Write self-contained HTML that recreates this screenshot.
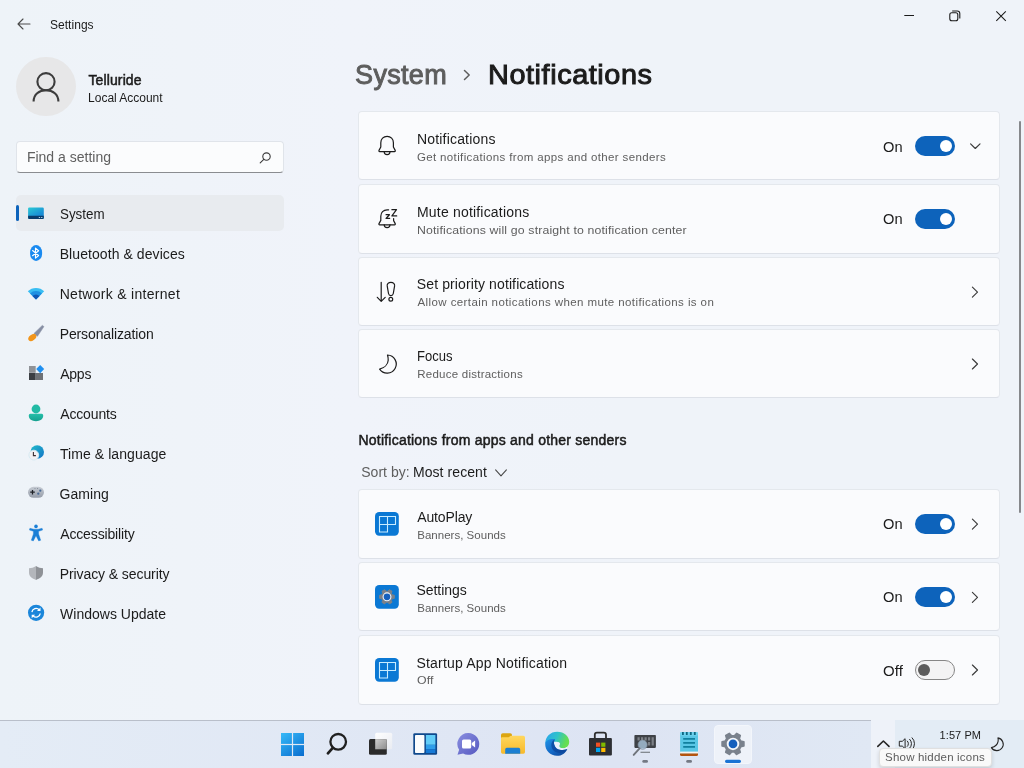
<!DOCTYPE html>
<html>
<head>
<meta charset="utf-8">
<title>Settings</title>
<style>
*{box-sizing:border-box;margin:0;padding:0}
html,body{width:1024px;height:768px;overflow:hidden}
body{background:linear-gradient(90deg,#eef3f8 0%,#eff3f9 18%,#f0f3fa 34%,#eff3f9 60%,#eff3f9 100%);font-family:"Liberation Sans",sans-serif;color:#1b1b1b;position:relative}
.abs{position:absolute}
.t{position:absolute;white-space:nowrap;line-height:1;transform-origin:0 50%}
/* sidebar */
.nv{color:#1b1b1b}
.sel{position:absolute;left:16px;top:195.3px;width:267.5px;height:35.5px;border-radius:5px;background:#e8ebef}
.pill{position:absolute;left:16px;top:205.3px;width:3px;height:15.6px;border-radius:2px;background:#0d63bb}
.ico{position:absolute;left:26px;width:20px;height:20px}
/* cards */
.card{position:absolute;left:357.9px;width:642px;height:69px;background:#fafbfd;border:1px solid #e4e8ed;border-bottom-color:#dde1e8;border-radius:4px}
.ct{color:#1b1b1b}
.cs{color:#5e5e5e}
.st{color:#1b1b1b}
.tog{position:absolute;left:915px;width:40px;height:20px;border-radius:10px;background:#0d63bb}
.tog i{position:absolute;right:2.7px;top:3.8px;width:12.4px;height:12.4px;border-radius:50%;background:#fff}
.tog.off{background:#f3f3f4;border:1px solid #868686}
.tog.off i{left:1.9px;right:auto;top:2.9px;width:12.2px;height:12.2px;background:#5c5c5c}
svg{position:absolute;overflow:visible}
</style>
</head>
<body>
<div id="root" style="position:absolute;left:0;top:0;width:1024px;height:768px;will-change:transform">

<!-- ===== title bar ===== -->
<svg style="left:17px;top:18px" width="14" height="12" viewBox="0 0 14 12" fill="none" stroke="#4a4a4a" stroke-width="1.1" stroke-linecap="round" stroke-linejoin="round"><path d="M13 6H1.2M6 1L1 6l5 5"/></svg>
<div class="t" id="tSettings" style="left:50.00px;top:19.00px;font-size:12px;color:#1b1b1b;font-weight:normal;letter-spacing:0.034px">Settings</div>

<svg style="left:904px;top:15px" width="12" height="2" viewBox="0 0 12 2"><path d="M0.3 0.5H10" stroke="#1b1b1b" stroke-width="1"/></svg>
<svg style="left:949px;top:10px" width="12" height="12" viewBox="0 0 12 12" fill="none" stroke="#1b1b1b" stroke-width="1.1"><rect x="0.8" y="2.8" width="8" height="8" rx="2"/><path d="M3.2 1h5a2.6 2.6 0 0 1 2.6 2.6v5"/></svg>
<svg style="left:996px;top:11px" width="12" height="12" viewBox="0 0 12 12" fill="none" stroke="#1b1b1b" stroke-width="1.05"><path d="M0.3 0.3l9.5 9.500M9.800 0.300l-9.500 9.500"/></svg>

<!-- ===== account ===== -->
<div class="abs" style="left:16.4px;top:57px;width:59.4px;height:59.4px;border-radius:50%;background:#e7e7e8"></div>
<svg style="left:31.1px;top:70px" width="30" height="34" viewBox="0 0 30 34" fill="none" stroke="#3c3c3c" stroke-width="2.1" stroke-linecap="butt"><circle cx="15" cy="11.700" r="8.600"/><path d="M2.600 31.500c0-7 5.400-11.200 12.400-11.200s12.400 4.200 12.400 11.200"/></svg>
<div class="t" id="tUser" style="left:88.40px;top:72.75px;font-size:14px;font-weight:normal;-webkit-text-stroke:0.5px #1b1b1b;color:#1b1b1b;letter-spacing:0.131px">Telluride</div>
<div class="t" id="tLocal" style="left:88.10px;top:91.80px;font-size:12px;color:#1b1b1b;font-weight:normal;letter-spacing:-0.021px">Local Account</div>

<!-- ===== search ===== -->
<div class="abs" style="left:16.3px;top:141.3px;width:267.4px;height:31.6px;border-radius:4px;background:#fbfcfd;border:1px solid #e0e4ea;border-bottom:1px solid #8a8c90"></div>
<div class="t" id="tFind" style="left:26.90px;top:150.10px;font-size:14px;color:#606060;font-weight:normal;letter-spacing:0.003px">Find a setting</div>
<svg style="left:259px;top:151.500px" width="13" height="13" viewBox="0 0 13 13" fill="none" stroke="#3a3a3a" stroke-width="1.1" stroke-linecap="round"><circle cx="7.5" cy="4.6" r="3.7"/><path d="M4.800 7.300L1.200 10.900"/></svg>

<!-- ===== nav ===== -->
<div class="sel"></div><div class="pill"></div>
<div class="t nv" id="n0" style="top:207.00px;left:59.53px;font-size:14px;font-weight:normal;transform:scaleX(0.9556)">System</div>
<div class="t nv" id="n1" style="top:247.00px;left:59.70px;font-size:14px;font-weight:normal;letter-spacing:0.075px">Bluetooth &amp; devices</div>
<div class="t nv" id="n2" style="top:287.00px;left:59.70px;font-size:14px;font-weight:normal;letter-spacing:0.290px">Network &amp; internet</div>
<div class="t nv" id="n3" style="top:327.00px;left:59.70px;font-size:14px;font-weight:normal;letter-spacing:-0.124px">Personalization</div>
<div class="t nv" id="n4" style="top:367.00px;left:60.20px;font-size:14px;font-weight:normal;letter-spacing:-0.237px">Apps</div>
<div class="t nv" id="n5" style="top:407.00px;left:60.20px;font-size:14px;font-weight:normal;letter-spacing:-0.141px">Accounts</div>
<div class="t nv" id="n6" style="top:447.00px;left:59.90px;font-size:14px;font-weight:normal;letter-spacing:0.083px">Time &amp; language</div>
<div class="t nv" id="n7" style="top:487.00px;left:59.50px;font-size:14px;font-weight:normal;letter-spacing:0.053px">Gaming</div>
<div class="t nv" id="n8" style="top:527.00px;left:60.20px;font-size:14px;font-weight:normal;letter-spacing:-0.137px">Accessibility</div>
<div class="t nv" id="n9" style="top:567.00px;left:59.70px;font-size:14px;font-weight:normal;letter-spacing:-0.085px">Privacy &amp; security</div>
<div class="t nv" id="n10" style="top:607.00px;left:60.10px;font-size:14px;font-weight:normal;letter-spacing:0.005px">Windows Update</div>
<!--NAVICONS-->


<!-- ===== heading ===== -->
<div class="t" id="hSys" style="left:355.10px;top:61.80px;font-size:27px;color:#5d5d5d;font-weight:normal;-webkit-text-stroke:0.95px #5d5d5d;letter-spacing:0.315px">System</div>
<svg style="left:463px;top:69px" width="8" height="12" viewBox="0 0 8 12" fill="none" stroke="#5d5d5d" stroke-width="1.5" stroke-linecap="round" stroke-linejoin="round"><path d="M1.5 1.5L6.2 6 1.5 10.5"/></svg>
<div class="t" id="hNot" style="left:487.95px;top:61.80px;font-size:27px;color:#1b1b1b;font-weight:normal;-webkit-text-stroke:0.95px #1b1b1b;transform:scaleX(1.0700);letter-spacing:0.516px">Notifications</div>

<!-- ===== cards ===== -->
<div class="card" style="top:110.8px;height:69.7px"></div>
<div class="card" style="top:183.9px;height:69.8px"></div>
<div class="card" style="top:257.0px;height:68.7px"></div>
<div class="card" style="top:328.8px;height:68.9px"></div>
<div class="card" style="top:489.3px;height:69.6px"></div>
<div class="card" style="top:561.8px;height:69.7px"></div>
<div class="card" style="top:635.0px;height:69.5px"></div>

<div class="t ct" id="c0" style="top:132.00px;left:417.00px;font-size:14px;font-weight:normal;letter-spacing:0.179px">Notifications</div>
<div class="t cs" id="s0" style="top:152.15px;left:416.90px;font-size:11.5px;font-weight:normal;letter-spacing:0.367px">Get notifications from apps and other senders</div>
<div class="t ct" id="c1" style="top:205.10px;left:417.00px;font-size:14px;font-weight:normal;letter-spacing:0.189px">Mute notifications</div>
<div class="t cs" id="s1" style="top:225.15px;left:417.14px;font-size:11.5px;font-weight:normal;transform:scaleX(1.0700);letter-spacing:0.139px">Notifications will go straight to notification center</div>
<div class="t ct" id="c2" style="top:276.60px;left:416.80px;font-size:14px;font-weight:normal;letter-spacing:0.115px">Set priority notifications</div>
<div class="t cs" id="s2" style="top:296.65px;left:417.50px;font-size:11.5px;font-weight:normal;letter-spacing:0.409px">Allow certain notications when mute notifications is on</div>
<div class="t ct" id="c3" style="top:349.00px;left:417.07px;font-size:14px;font-weight:normal;transform:scaleX(0.9318)">Focus</div>
<div class="t cs" id="s3" style="top:369.15px;left:417.20px;font-size:11.5px;font-weight:normal;letter-spacing:0.247px">Reduce distractions</div>

<div class="t" id="secH" style="left:358.45px;top:432.60px;font-size:14px;font-weight:normal;-webkit-text-stroke:0.5px #1b1b1b;color:#1b1b1b;letter-spacing:0.222px">Notifications from apps and other senders</div>
<div class="t" id="sortA" style="left:361.20px;top:465.00px;font-size:14px;color:#5e5e5e;font-weight:normal;letter-spacing:0.035px">Sort by:</div>
<div class="t" id="sortB" style="left:412.90px;top:465.00px;font-size:14px;color:#1b1b1b;font-weight:normal;letter-spacing:0.085px">Most recent</div>
<svg style="left:495.2px;top:469px" width="12" height="8" viewBox="0 0 12 8" fill="none" stroke="#4a4a4a" stroke-width="1.1" stroke-linecap="round" stroke-linejoin="round"><path d="M0.6 0.900L6 6.800l5.400-5.900"/></svg>

<div class="t ct" id="c4" style="top:509.50px;left:417.20px;font-size:14px;font-weight:normal;letter-spacing:-0.133px">AutoPlay</div>
<div class="t cs" id="s4" style="top:529.55px;left:417.20px;font-size:11.5px;font-weight:normal;letter-spacing:0.023px">Banners, Sounds</div>
<div class="t ct" id="c5" style="top:582.60px;left:416.50px;font-size:14px;font-weight:normal;letter-spacing:-0.062px">Settings</div>
<div class="t cs" id="s5" style="top:602.65px;left:417.20px;font-size:11.5px;font-weight:normal;letter-spacing:0.023px">Banners, Sounds</div>
<div class="t ct" id="c6" style="top:655.75px;left:416.50px;font-size:14px;font-weight:normal;letter-spacing:0.183px">Startup App Notification</div>
<div class="t cs" id="s6" style="top:675.15px;left:416.96px;font-size:11.5px;font-weight:normal;transform:scaleX(1.0700);letter-spacing:0.064px">Off</div>

<!-- toggles + state -->
<div class="t st" id="on0" style="left:882.57px;top:139.70px;font-size:14px;font-weight:normal;transform:scaleX(1.0471);letter-spacing:0.000px">On</div><div class="tog" style="top:136px"><i></i></div>
<div class="t st" id="on1" style="left:882.57px;top:212.40px;font-size:14px;font-weight:normal;transform:scaleX(1.0471);letter-spacing:0.000px">On</div><div class="tog" style="top:209px"><i></i></div>
<div class="t st" id="on2" style="left:882.57px;top:517.40px;font-size:14px;font-weight:normal;transform:scaleX(1.0471);letter-spacing:0.000px">On</div><div class="tog" style="top:514px"><i></i></div>
<div class="t st" id="on3" style="left:882.57px;top:590.30px;font-size:14px;font-weight:normal;transform:scaleX(1.0471);letter-spacing:0.000px">On</div><div class="tog" style="top:587px"><i></i></div>
<div class="t st" id="on4" style="left:882.55px;top:663.50px;font-size:14px;font-weight:normal;transform:scaleX(1.0700);letter-spacing:0.152px">Off</div><div class="tog off" style="top:660px"><i></i></div>
<!--CHEVRONS-->
<!--CARDICONS-->
<svg style="left:0;top:0" width="1024" height="768" viewBox="0 0 1024 768">
<defs>
<linearGradient id="gSys" x1="0" y1="0" x2="0.7" y2="1"><stop offset="0" stop-color="#2bcad4"/><stop offset="0.75" stop-color="#1a8fd6"/><stop offset="1" stop-color="#1a86d0"/></linearGradient>
<linearGradient id="gGlobe" x1="0" y1="0" x2="1" y2="1"><stop offset="0" stop-color="#22bccb"/><stop offset="1" stop-color="#1273c6"/></linearGradient>
<linearGradient id="gShield" x1="0" y1="0" x2="1" y2="0"><stop offset="0.5" stop-color="#b3b6bb"/><stop offset="0.5" stop-color="#8f9297"/></linearGradient>
<linearGradient id="gPad" x1="0" y1="0" x2="0" y2="1"><stop offset="0" stop-color="#c6cbd3"/><stop offset="1" stop-color="#979eaa"/></linearGradient>
<linearGradient id="gAcc" x1="0" y1="0" x2="0" y2="1"><stop offset="0" stop-color="#25bfa9"/><stop offset="1" stop-color="#16a08f"/></linearGradient>
<linearGradient id="gWin" gradientUnits="userSpaceOnUse" x1="281" y1="733" x2="300" y2="758"><stop offset="0" stop-color="#37baf8"/><stop offset="1" stop-color="#0b6fd0"/></linearGradient>
<linearGradient id="gChat" x1="0" y1="0" x2="1" y2="1"><stop offset="0" stop-color="#8a8fe0"/><stop offset="1" stop-color="#5558c0"/></linearGradient>
<linearGradient id="gFold" x1="0" y1="0" x2="0" y2="1"><stop offset="0" stop-color="#ffd75e"/><stop offset="1" stop-color="#f7b92a"/></linearGradient>
<linearGradient id="gEdge" x1="0" y1="0" x2="1" y2="1"><stop offset="0" stop-color="#1f92e6"/><stop offset="0.55" stop-color="#1366c4"/><stop offset="1" stop-color="#0c3f8f"/></linearGradient>
<linearGradient id="gEdge2" x1="0" y1="0.300" x2="1" y2="0.600"><stop offset="0" stop-color="#2aa6ea"/><stop offset="0.45" stop-color="#2fc3c9"/><stop offset="0.85" stop-color="#5fdc5a"/><stop offset="1" stop-color="#6ae04e"/></linearGradient>
<linearGradient id="gTv" x1="0" y1="0" x2="1" y2="1"><stop offset="0" stop-color="#ffffff"/><stop offset="1" stop-color="#e9ecf2"/></linearGradient>
<linearGradient id="gTv2" x1="0" y1="0" x2="1" y2="1"><stop offset="0" stop-color="#d0d0d0"/><stop offset="1" stop-color="#8c8c8c"/></linearGradient>
</defs>
<!-- System -->
<rect x="28.1" y="207.5" width="15.7" height="11.4" rx="1.2" fill="url(#gSys)"/>
<path d="M28.100 215.800h15.700v1.900a1.200 1.200 0 0 1-1.200 1.200h-13.300a1.200 1.200 0 0 1-1.200-1.200z" fill="#0a3c6c"/>
<rect x="38.800" y="217" width="1.300" height="0.900" fill="#bfe6f7"/><rect x="41.100" y="217" width="1.300" height="0.900" fill="#bfe6f7"/>
<!-- Bluetooth -->
<rect x="30.1" y="245.1" width="12" height="15.9" rx="6" ry="7.3" fill="#1a8af0"/>
<path d="M32.6 250.5L38.6 255.5L35.5 258.1V248.1L38.6 250.7L32.6 255.7" fill="none" stroke="#fff" stroke-width="1.15" stroke-linejoin="round" stroke-linecap="round"/>
<!-- Wifi -->
<path d="M36.0 299.4L27.80 291.34A11.5 11.5 0 0 1 44.20 291.34Z" fill="#38bdf2"/>
<path d="M36.0 299.4L30.08 293.58A8.3 8.3 0 0 1 41.92 293.58Z" fill="#1d90e2"/>
<path d="M36.0 299.4L32.43 295.90A5.0 5.0 0 0 1 39.57 295.90Z" fill="#0e56b4"/>
<!-- Personalization brush -->
<path d="M42.3 325.4L43.9 326.6L37.4 336.3L34 333.5Z" fill="#868ea3" stroke="#868ea3" stroke-width="0.6" stroke-linejoin="round"/>
<ellipse cx="32.3" cy="337.5" rx="4.5" ry="2.9" transform="rotate(-38 32.3 337.5)" fill="#f2951a"/>
<!-- Apps -->
<rect x="29" y="366" width="6.7" height="6.8" fill="#8f9297"/>
<rect x="29" y="373" width="6.7" height="7" fill="#3b3e43"/>
<rect x="36" y="373" width="7" height="7" fill="#6e7176"/>
<path d="M40.2 365l4 4.100-4 4.100-4-4.100z" fill="#1f8ff0"/>
<!-- Accounts -->
<circle cx="36" cy="409" r="4.400" fill="#22baa5"/>
<path d="M28.800 415.300a1.500 1.500 0 0 1 1.500-1.500h11.400a1.500 1.500 0 0 1 1.500 1.500v.5c0 3.500-3.100 5.400-7.200 5.400s-7.200-1.900-7.200-5.400z" fill="url(#gAcc)"/>
<!-- Time & language -->
<circle cx="37.2" cy="452" r="6.8" fill="url(#gGlobe)"/>
<circle cx="33.8" cy="455.1" r="4.9" fill="#f1f1f3" stroke="#d4e9f2" stroke-width="0.9"/>
<path d="M33.400 452v3.600h2.500" fill="none" stroke="#3b2f33" stroke-width="1.100"/>
<!-- Gaming -->
<rect x="28" y="486.8" width="16" height="11" rx="5.5" fill="url(#gPad)"/>
<path d="M30.200 492.200h4.600M32.500 489.900v4.600" stroke="#1e2126" stroke-width="1.250"/>
<circle cx="40.300" cy="490.700" r="1.150" fill="#4a6a94"/><circle cx="38.300" cy="493.700" r="1.150" fill="#4a6a94"/><circle cx="35" cy="488.500" r="0.450" fill="#596273"/><circle cx="37.600" cy="488.500" r="0.450" fill="#596273"/>
<!-- Accessibility -->
<circle cx="36" cy="526.400" r="1.800" fill="#1b7fd6"/>
<path d="M29.900 528.300L33.800 529.200H38.200L42.100 528.300L42.600 530L38.600 531.300V534L40.700 540.200L38.700 540.900L36 535.700L33.300 540.900L31.300 540.200L33.400 534V531.300L29.400 530Z" fill="#1b7fd6" stroke="#1b7fd6" stroke-width="0.400" stroke-linejoin="round"/>
<!-- Privacy shield -->
<path d="M36 566c2.400 1.600 4.500 2.100 7 2.200v4.400c0 3.900-3.100 6.200-7 7.300c-3.900-1.100-7-3.400-7-7.300v-4.400c2.500-.1 4.600-.6 7-2.200z" fill="url(#gShield)"/>
<!-- Windows Update -->
<circle cx="36.100" cy="612.800" r="8.100" fill="#1b86da"/>
<path d="M31.900 612.100a4.300 4.300 0 0 1 7.300-2.400" fill="none" stroke="#fff" stroke-width="1.300"/>
<path d="M40.500 607.400v3.500h-3.500z" fill="#fff"/>
<path d="M40.300 613.500a4.300 4.300 0 0 1-7.300 2.400" fill="none" stroke="#fff" stroke-width="1.300"/>
<path d="M31.700 618.200v-3.500h3.500z" fill="#fff"/>

<!-- ===== card icons ===== -->
<g fill="none" stroke="#1b1b1b" stroke-width="1.200" stroke-linejoin="round" stroke-linecap="round">
<!-- bell -->
<path d="M387.100 136.300c-3.700 0-6.300 2.800-6.300 6.400v4.300l-1.800 3.400c-.3.600 0 1.200.7 1.200h14.800c.7 0 1-.6.700-1.200l-1.800-3.400v-4.300c0-3.600-2.600-6.400-6.300-6.400z"/>
<path d="M384.200 151.800a2.900 2.900 0 0 0 5.800 0"/>
<!-- mute bell -->
<path d="M388.600 209.900c-.5-.1-1-.1-1.500-.1c-3.700 0-6.300 2.800-6.300 6.400v4.200l-1.800 3.200c-.3.600 0 1.200.7 1.200h14.800c.7 0 1-.6.700-1.200l-1.600-3v-2"/>
<path d="M384.200 224.800a2.900 2.900 0 0 0 5.800 0"/>
<path d="M386.100 214.700h3.300l-3.300 3.700h3.500" stroke-width="1.300"/>
<path d="M391.900 209.700h4.600l-4.600 6.200h4.800"/>
<!-- priority -->
<path d="M381.200 282.300v18.800M377.300 297.300l3.900 4 4-4"/>
<path d="M390.900 282.300c2.500 0 3.900 1.600 3.700 3.600l-1.300 7.600c-.3 1.500-1.200 2.100-2.400 2.100s-2.100-.6-2.400-2.100l-1.300-7.600c-.2-2 1.200-3.600 3.700-3.600z"/>
<circle cx="390.800" cy="299.300" r="1.900"/>
<!-- focus moon -->
<path d="M387.5 355A9.1 9.1 0 1 1 379.6 369.2C384 368 388 364.6 388.2 360.2C388.3 358.4 388 356.6 387.5 355Z"/>
</g>
<!-- right chevrons -->
<g fill="none" stroke="#3a3a3a" stroke-width="1.150" stroke-linejoin="round" stroke-linecap="round">
<path d="M970.6 143.8l4.7 4.7 4.7-4.7"/>
<path d="M972.400 287.200l5.100 5-5.100 5"/>
<path d="M972.400 359l5.100 5-5.100 5"/>
<path d="M972.400 519.200l5.100 5-5.100 5"/>
<path d="M972.400 592.300l5.100 5-5.100 5"/>
<path d="M972.400 665l5.100 5-5.100 5"/>
</g>
<!-- app icons -->
<rect x="375" y="512" width="23.800" height="23.800" rx="4.200" fill="#0a78d4"/>
<path d="M379.500 516.500h16v8h-8v7.500h-8zM387.500 516.500v8M379.500 524.500h8" fill="none" stroke="#c9ecff" stroke-width="1.100"/>
<rect x="375" y="585" width="23.800" height="23.800" rx="4.200" fill="#0a78d4"/>
<path d="M392.25 594.85 L394.34 595.24 L394.34 598.36 L392.25 598.75 L391.31 600.37 L392.02 602.37 L389.32 603.93 L387.93 602.32 L386.07 602.32 L384.68 603.93 L381.98 602.37 L382.69 600.37 L381.75 598.75 L379.66 598.36 L379.66 595.24 L381.75 594.85 L382.69 593.23 L381.98 591.23 L384.68 589.67 L386.07 591.28 L387.93 591.28 L389.32 589.67 L392.02 591.23 L391.31 593.23Z" fill="#7b8189" stroke="#7b8189" stroke-width="1" stroke-linejoin="round"/>
<circle cx="387" cy="596.8" r="3.9" fill="#1560bd" stroke="#eef4fb" stroke-width="1.1"/>
<rect x="375" y="658" width="23.800" height="23.800" rx="4.200" fill="#0a78d4"/>
<path d="M379.500 662.500h16v8h-8v7.500h-8zM387.500 662.500v8M379.500 670.500h8" fill="none" stroke="#c9ecff" stroke-width="1.100"/>
</svg>

<!-- scrollbar -->
<div class="abs" style="left:1018.8px;top:121.2px;width:2.4px;height:392px;background:#86888c;border-radius:1.2px"></div>

<!-- ===== taskbar ===== -->
<div class="abs" id="taskbar" style="left:0;top:720px;width:1024px;height:48px;background:linear-gradient(90deg,#e4ecf6 0%,#dfe6f4 45%,#dde4f3 60%,#e0e8f4 85%,#e4edf5 100%);border-top:1px solid #b9bfca"></div>
<!--TASKBAR-->
<!-- right segment of taskbar (system tray) -->
<div class="abs" style="left:871px;top:720px;width:24px;height:48px;background:#eef2f9"></div>
<div class="abs" style="left:895px;top:720px;width:129px;height:48px;background:#e3ecf5"></div>
<!-- active app highlight -->
<div class="abs" style="left:714px;top:725px;width:38px;height:38.500px;border-radius:4px;background:#eef2f9;border:1px solid #f3f6fb"></div>
<svg style="left:0;top:0" width="1024" height="768" viewBox="0 0 1024 768">
<!-- start -->
<g fill="url(#gWin)">
<rect x="281" y="733" width="10.900" height="10.900"/><rect x="293.100" y="733" width="10.900" height="10.900"/>
<rect x="281" y="745.100" width="10.900" height="10.900"/><rect x="293.100" y="745.100" width="10.900" height="10.900"/>
</g>
<!-- search -->
<circle cx="338.2" cy="741.8" r="7.8" fill="none" stroke="#202020" stroke-width="2.3"/>
<path d="M332.800 747.800l-4.900 5.500" stroke="#202020" stroke-width="2.700" stroke-linecap="round"/>
<!-- task view -->
<rect x="375.200" y="732.800" width="17" height="16.500" rx="1.500" fill="url(#gTv)"/>
<rect x="369" y="739.100" width="17.800" height="15.700" rx="1.500" fill="#2b2b2b"/>
<path d="M375.200 739.100h11.600v10.200h-11.600z" fill="url(#gTv2)"/>
<!-- widgets -->
<rect x="413.3" y="733.2" width="23.8" height="21.6" rx="1.4" fill="#10498c"/>
<rect x="415" y="735" width="9.4" height="18" rx="0.8" fill="#fbfcfd"/>
<rect x="425.9" y="735" width="9.5" height="9.8" fill="#62cdf8"/>
<rect x="425.9" y="744.8" width="9.5" height="4.4" fill="#2f9eea"/>
<rect x="425.9" y="749.2" width="9.5" height="3.8" fill="#177ad6"/>
<!-- chat -->
<path d="M468.400 733.100a10.850 10.850 0 1 1-5.300 20.300l-5.600 1.400 1.600-5a10.850 10.850 0 0 1 9.300-16.700z" fill="url(#gChat)"/>
<rect x="462" y="739.400" width="9.200" height="9.100" rx="1.600" fill="#fff"/>
<path d="M471.800 743.100l3.300-2.600v7l-3.300-2.600z" fill="#fff"/>
<!-- explorer -->
<rect x="501" y="733.2" width="11" height="6" rx="1.8" fill="#dca511"/>
<path d="M501 738.200a1 1 0 0 1 1-1h6.600l2.300-1.400h12.500a1.600 1.600 0 0 1 1.600 1.600v14.700a1.600 1.600 0 0 1-1.600 1.600h-20.800a1.600 1.600 0 0 1-1.600-1.600z" fill="url(#gFold)"/>
<path d="M505.200 749.400a1.600 1.600 0 0 1 1.600-1.600h11.800a1.600 1.600 0 0 1 1.600 1.600v4.300h-15z" fill="#1c7fd2"/>
<!-- edge -->
<path d="M545.300 743.500C545.300 736.600 550.500 731.800 557.200 731.800C564.200 731.800 569.200 736.400 569.200 741.800C569.200 745.800 566.600 748.300 563 748.300C560.600 748.300 559.200 747.300 559.200 746C559.200 745.200 559.900 744.600 559.900 743.800C559.900 742.400 558.400 741.700 556.600 741.700C552 741.700 547 741.800 545.300 743.500Z" fill="url(#gEdge2)"/>
<path d="M554.300 742.600C556.600 741.300 559.700 742 559.900 743.800C559.900 744.600 559.200 745.200 559.200 746C559.200 747.300 560.600 748.300 563 748.300C564.600 748.300 566 747.800 567 747L567.300 749.600C565 750.800 562.400 751.200 559.600 751.200C556.400 751.200 553.400 748.600 553.200 745.600C553.100 744.400 553.600 743.400 554.300 742.600Z" fill="#ecf3fc"/>
<path d="M545.200 743.800C545.600 740.600 549.800 738.500 555 739.200C554 740.600 553.700 742.600 554.300 744.700C555.100 747.800 557.400 749.900 561 749.900C563.400 749.900 565.400 749.600 567.300 748.900C565.700 753 561.800 755.800 557 755.800C550.400 755.800 545 750.500 545.200 743.800Z" fill="url(#gEdge)"/>
<path d="M555 739.200C554 740.600 553.700 742.600 554.300 744.700C555.100 747.800 557.400 749.900 561 749.900C563.400 749.900 565.400 749.600 567.300 748.900C565.800 751.600 563 753 560 753C555 753 551.300 749.400 551.300 745C551.300 742.400 552.800 740.200 555 739.200Z" fill="#0b449a" fill-opacity="0.750"/>
<!-- store -->
<path d="M594.800 738.600v-3.800a2.200 2.200 0 0 1 2.200-2.200h6.800a2.200 2.200 0 0 1 2.200 2.200v3.800" fill="none" stroke="#2c2c2c" stroke-width="1.800"/>
<rect x="589" y="737.900" width="22.900" height="17.700" rx="1" fill="#2d2f33"/>
<rect x="596" y="742.600" width="4.200" height="4.200" fill="#f25022"/><rect x="601.200" y="742.600" width="4.200" height="4.200" fill="#7fba00"/>
<rect x="596" y="747.800" width="4.200" height="4.200" fill="#00a4ef"/><rect x="601.200" y="747.800" width="4.200" height="4.200" fill="#ffb900"/>
<!-- magnifier/monitor -->
<rect x="634.4" y="734.9" width="21.5" height="13" rx="0.8" fill="#3f4247"/>
<path d="M637.500 737.300h2.200v3.200h-2.200zM641 737.300h2.200v3.200h-2.200zM644.500 737.300h2.200v3.200h-2.200zM648 737.300h2.200v3.200h-2.200zM651.600 737.300h2.200v8.200h-2.200zM648 742h2.200v3.500h-2.200z" fill="#7d8187"/>
<path d="M640.500 752.300h9.500" stroke="#7a7f86" stroke-width="1.200"/>
<circle cx="642.600" cy="744.700" r="4.600" fill="#a3bdd3" fill-opacity="0.850" stroke="#7f8c9a" stroke-width="0.700"/>
<path d="M639.600 748.400l-5.900 6.500" stroke="#6f747b" stroke-width="1.900" stroke-linecap="round"/>
<rect x="642.300" y="760" width="5.700" height="2.800" rx="1.400" fill="#747984"/>
<!-- notepad -->
<rect x="680.1" y="732.3" width="17.9" height="21.300" rx="1.200" fill="#5ac7e6"/>
<rect x="680.1" y="732.3" width="17.9" height="3.400" rx="1" fill="#6fd2ee"/>
<path d="M682.900 731.900v3M686.800 731.900v3M690.800 731.900v3M694.800 731.900v3" stroke="#0d6781" stroke-width="1.800"/>
<path d="M683.200 738.900h11.800M683.200 742.900h11.800M683.200 746.900h11.800" stroke="#11809f" stroke-width="1.900"/>
<rect x="680.100" y="751.600" width="17.900" height="2.100" fill="#f7f3ef"/>
<path d="M680 753.600h18v0.900a1.500 1.500 0 0 1-1.500 1.500h-15a1.500 1.500 0 0 1-1.500-1.500z" fill="#b4540f"/>
<rect x="686.200" y="760" width="5.800" height="2.800" rx="1.400" fill="#747984"/>
<!-- settings gear -->
<path d="M740.72 741.12 L743.81 741.84 L743.81 745.96 L740.72 746.68 L739.26 749.19 L740.19 752.23 L736.62 754.29 L734.45 751.97 L731.55 751.97 L729.38 754.29 L725.81 752.23 L726.74 749.19 L725.28 746.68 L722.19 745.96 L722.19 741.84 L725.28 741.12 L726.74 738.61 L725.81 735.57 L729.38 733.51 L731.55 735.83 L734.45 735.83 L736.62 733.51 L740.19 735.57 L739.26 738.61Z" fill="#7a828d" stroke="#7a828d" stroke-width="1.8" stroke-linejoin="round"/>
<circle cx="733" cy="743.900" r="5.300" fill="#1560bd" stroke="#f4f7fb" stroke-width="1.900"/>
<rect x="725" y="759.800" width="16" height="3.100" rx="1.550" fill="#1a73d4"/>
<!-- tray -->
<path d="M877.800 746.400l5.600-5.400 5.600 5.400" fill="none" stroke="#262626" stroke-width="1.600" stroke-linecap="round" stroke-linejoin="round"/>
<g fill="none" stroke="#262626" stroke-width="1" stroke-linecap="round" stroke-linejoin="round">
<path d="M899.700 741.300h2.600l2.800-2.600v10l-2.800-2.600h-2.600z"/>
<path d="M907.300 741a3.600 3.600 0 0 1 0 5.400M909.700 739.300a6 6 0 0 1 0 8.800M912.100 737.800a8.200 8.200 0 0 1 0 11.800"/>
</g>
<path d="M997.9 737.9A6.400 6.400 0 1 1 991.400 747.600C994.600 746.800 997.600 744.400 998.100 741.400C998.300 740.200 998.300 739 997.900 737.900Z" fill="none" stroke="#262626" stroke-width="1.1" stroke-linejoin="round"/>
</svg>
<div class="t" id="clock" style="left:939.60px;top:730.10px;font-size:11px;color:#1b1b1b;font-weight:normal;letter-spacing:0.066px">1:57 PM</div>
<!-- tooltip -->
<div class="abs" style="left:878.900px;top:747.500px;width:113px;height:19.500px;background:#f9f9f9;border:1px solid #e0e0e0;border-radius:4px;box-shadow:0 2px 4px rgba(0,0,0,0.140)"></div>
<div class="t" id="tip" style="left:885.10px;top:751.55px;font-size:11.5px;color:#5c5c5c;font-weight:normal;letter-spacing:0.195px">Show hidden icons</div>


</div>
</body>
</html>
